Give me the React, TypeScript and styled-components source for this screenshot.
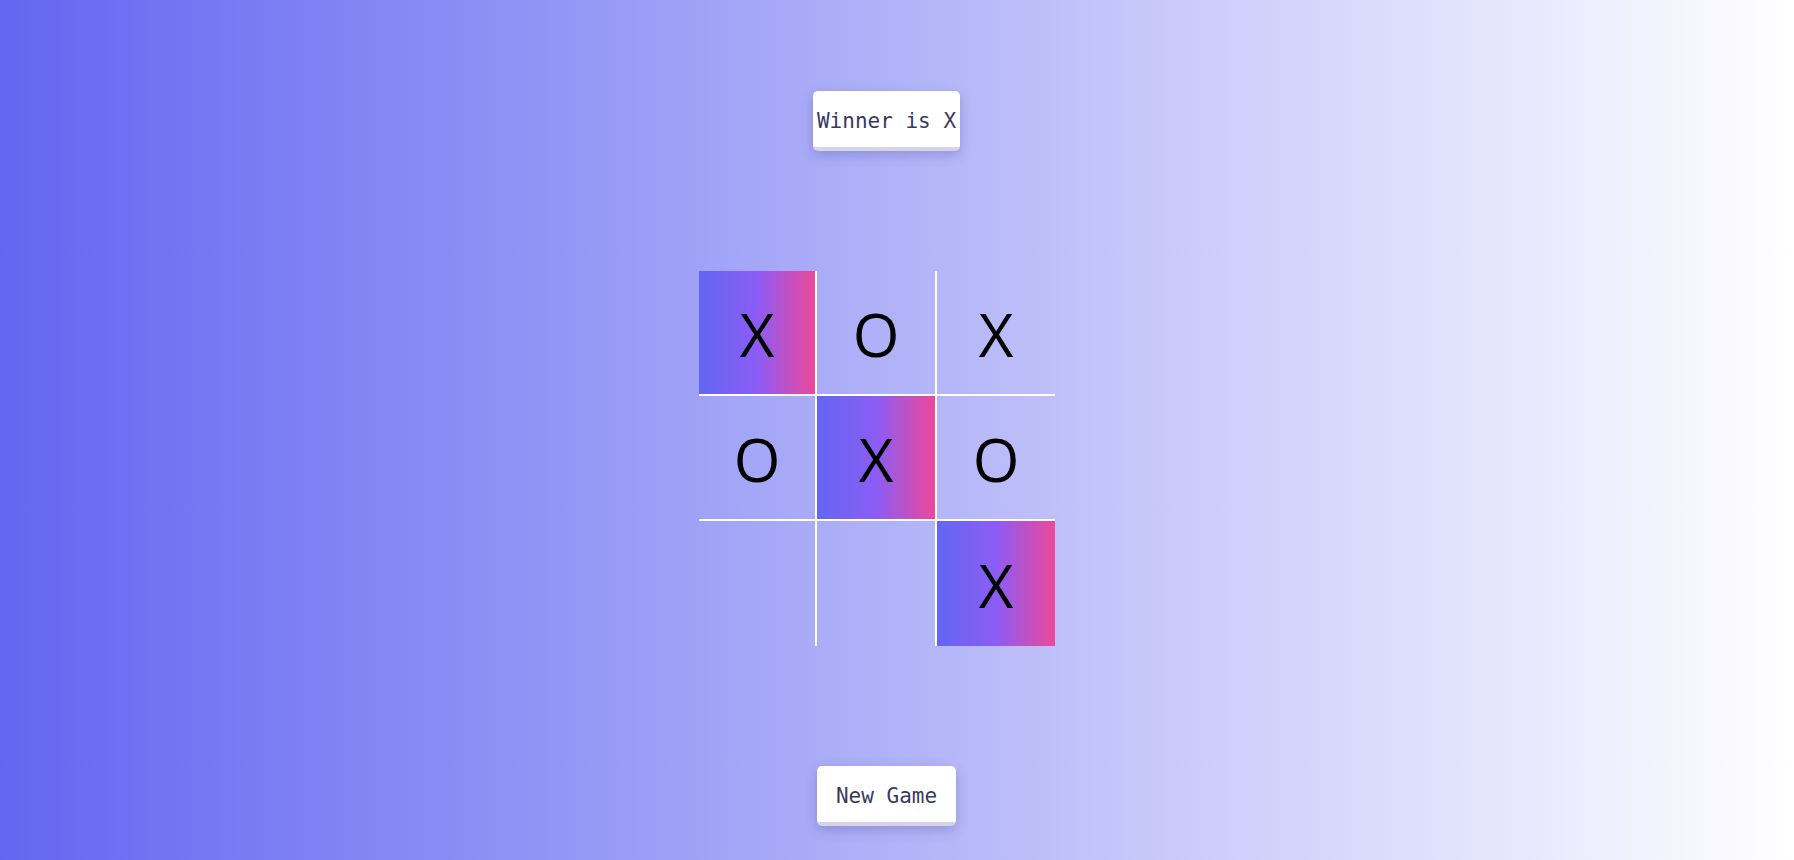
import React from "react";
import styled, { createGlobalStyle } from "styled-components";

const GlobalStyle = createGlobalStyle`
  html, body {
    margin: 0;
    padding: 0;
  }
  body {
    min-height: 860px;
    background: linear-gradient(to right, #6366f1, #ffffff);
    font-family: "DejaVu Sans Mono", monospace;
  }
`;

const Page = styled.main`
  box-sizing: border-box;
  min-height: 860px;
  display: flex;
  flex-direction: column;
  align-items: center;
  padding: 91px 21px 0 0;
  gap: 120px;
`;

const Card = styled.div<{ $padX: number }>`
  box-sizing: border-box;
  height: 60px;
  padding: 3px ${(p) => p.$padX}px 0;
  display: flex;
  align-items: center;
  justify-content: center;
  background: #ffffff;
  border: none;
  border-bottom: 4px solid #d5d4e7;
  border-radius: 5px;
  color: #383a5c;
  font-family: "DejaVu Sans Mono", monospace;
  font-size: 21px;
  box-shadow: 0 4px 12px rgba(60, 60, 140, 0.28);
`;

const Button = styled(Card).attrs({ as: "button" })`
  cursor: pointer;
`;

const BoardWrap = styled.div`
  padding-right: 19px;
`;

const Board = styled.div`
  display: grid;
  grid-template-columns: 118px 120px 118px;
  grid-template-rows: 125px 125px 125px;
`;

const Cell = styled.div<{ $right: boolean; $bottom: boolean; $win: boolean }>`
  box-sizing: border-box;
  display: flex;
  align-items: center;
  justify-content: center;
  border-right: ${(p) => (p.$right ? "2px solid #ffffff" : "none")};
  border-bottom: ${(p) => (p.$bottom ? "2px solid #ffffff" : "none")};
  background: ${(p) =>
    p.$win
      ? "linear-gradient(to right, #6366f1, #8b5cf6, #ec4899)"
      : "transparent"};
  background-clip: padding-box;
  font-family: "Open Sans", "Noto Sans", sans-serif;
  font-size: 60px;
  font-weight: 400;
  color: #000000;
  line-height: 1;
  padding-top: 2px;
`;

const squares = ["X", "O", "X", "O", "X", "O", "", "", "X"];
const winLine = [0, 4, 8];

export default function App() {
  return (
    <>
      <GlobalStyle />
      <Page>
        <Card $padX={4}>Winner is X</Card>
        <BoardWrap>
          <Board>
            {squares.map((v, i) => {
              const col = i % 3;
              const row = Math.floor(i / 3);
              return (
                <Cell
                  key={i}
                  $right={col < 2}
                  $bottom={row < 2}
                  $win={winLine.includes(i)}
                >
                  {v}
                </Cell>
              );
            })}
          </Board>
        </BoardWrap>
        <Button $padX={19}>New Game</Button>
      </Page>
    </>
  );
}
